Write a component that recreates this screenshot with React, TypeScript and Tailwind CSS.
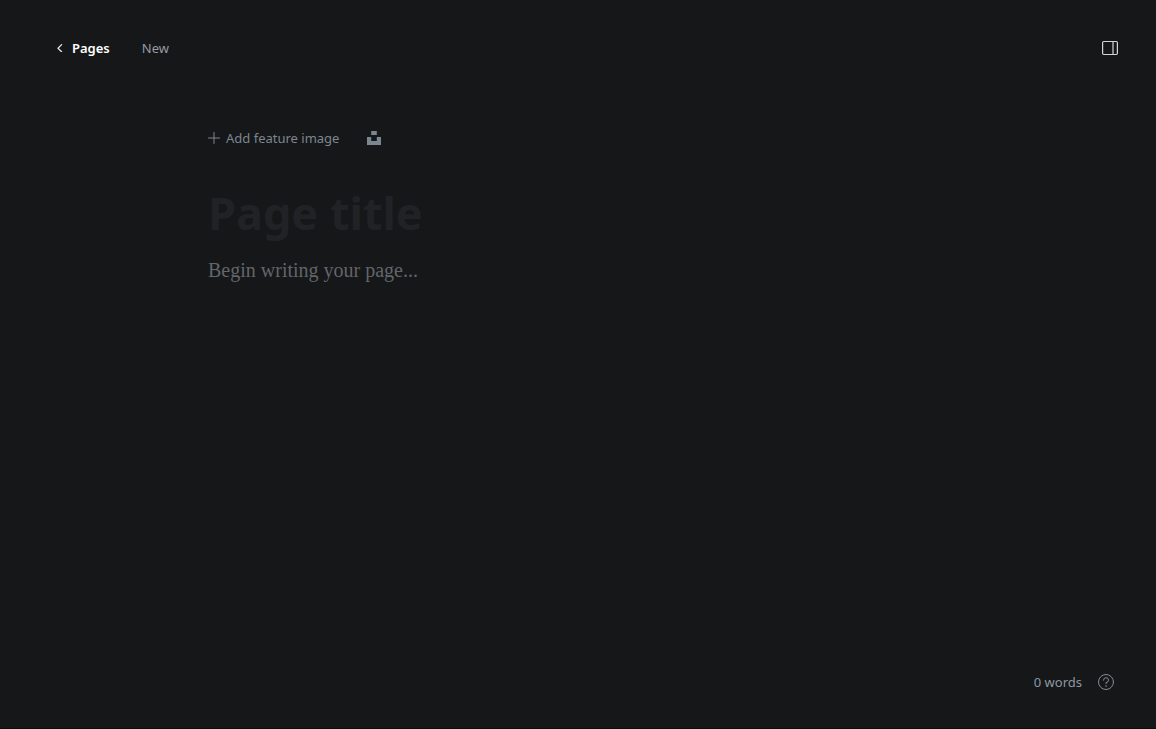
export default function App() {
  return (
    <div className="flex min-h-screen flex-col border-b border-[#0c0d0e] bg-[#161719] font-['Noto_Sans',sans-serif] text-[13px] leading-5 text-[#7c8690]">
      <header className="flex items-center justify-between px-8 pt-8">
        <nav className="flex items-center gap-8 pl-6 leading-6">
          <a href="#pages" className="flex items-center gap-2 font-semibold text-white">
            <svg className="h-2 w-2" viewBox="0 0 8 8" fill="none" stroke="#dfe1e3" strokeWidth="1.3" strokeLinecap="round" strokeLinejoin="round" aria-hidden="true">
              <path d="M5.6 .6 2 4.2l3.6 3.6" />
            </svg>
            Pages
          </a>
          <span className="text-[#959ba5]">New</span>
        </nav>
        <button type="button" aria-label="Settings" className="px-1.5 py-2">
          <svg className="h-4 w-4" viewBox="0 0 16 16" fill="none" stroke="#d4d5d6" strokeWidth="1.2" aria-hidden="true">
            <rect x=".6" y="1.5" width="14.8" height="13" rx="1.2" />
            <path d="M11 1.5v13" />
          </svg>
        </button>
      </header>

      <main className="mx-auto flex w-full max-w-[740px] grow flex-col pt-16">
        <div className="flex items-center gap-7">
          <button type="button" className="flex items-center gap-1.5">
            <svg className="h-3 w-3" viewBox="0 0 12 12" fill="none" stroke="#7c8690" strokeLinecap="round" aria-hidden="true">
              <path d="M6 .5v11M.5 6h11" />
            </svg>
            Add feature image
          </button>
          <button type="button" aria-label="Select an image from Unsplash">
            <svg className="h-3.5 w-3.5" viewBox="0 0 14 14" fill="#7c8690" aria-hidden="true">
              <path d="M4.2 0h5.6v4H4.2zM0 6h4.2v4h5.6V6H14v8H0z" />
            </svg>
          </button>
        </div>
        <input
          type="text"
          aria-label="Page title"
          placeholder="Page title"
          className="mt-8 h-16 w-full bg-transparent text-[45px] font-bold text-white outline-none placeholder:text-[#212225]"
        />
        <textarea
          aria-label="Page content"
          placeholder="Begin writing your page..."
          className="mt-2.5 w-full grow resize-none bg-transparent font-['Liberation_Serif',serif] text-[20px] leading-8 text-white outline-none placeholder:text-[#626569]"
        />
      </main>

      <footer className="flex items-center justify-end gap-4 px-10 pb-9">
        <span className="text-[#8f97a3]">0 words</span>
        <a href="#help" aria-label="Help">
          <svg className="mr-0.5 h-4 w-4" viewBox="0 0 16 16" fill="none" stroke="#858a93" strokeLinecap="round" strokeLinejoin="round" aria-hidden="true">
            <circle cx="8" cy="8" r="7.5" />
            <path d="M5.5 6.2A2.5 2.4 0 1 1 8 8.5v1.2" />
            <circle cx="8" cy="12" r=".2" />
          </svg>
        </a>
      </footer>
    </div>
  )
}
